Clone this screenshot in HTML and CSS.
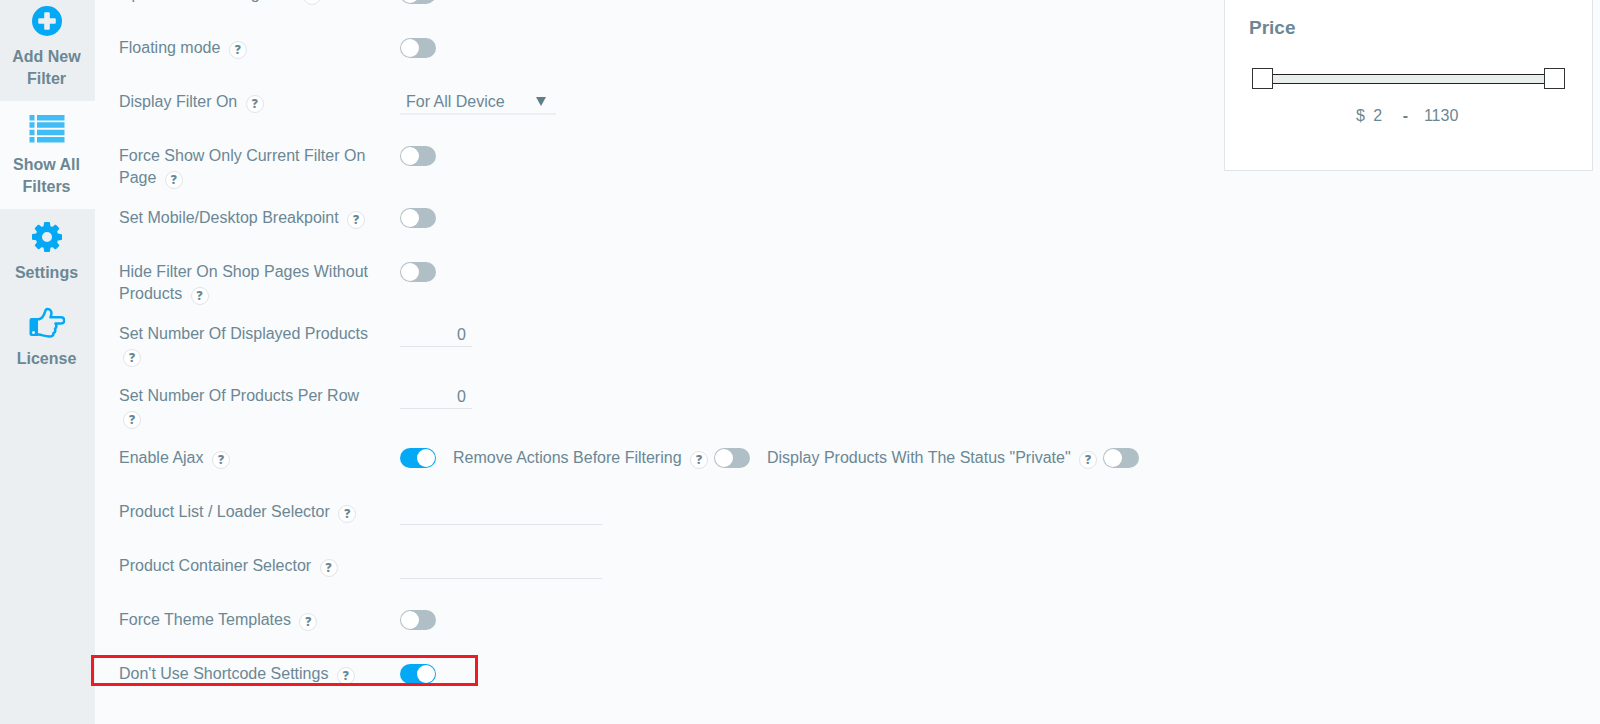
FILE: index.html
```html
<!DOCTYPE html>
<html lang="en">
<head>
<meta charset="utf-8">
<title>Filter settings</title>
<link rel="stylesheet" href="styles.css">
</head>
<body>
<div class="app">
  <nav class="sidebar">
    <a class="nav-item" href="#add">
      <svg class="icon" viewBox="0 0 36 32"><circle cx="18" cy="16" r="15"/><path class="cut" d="M16.200 7.200h3.600a1 1 0 0 1 1 1v5h5a1 1 0 0 1 1 1v3.600a1 1 0 0 1-1 1h-5v5a1 1 0 0 1-1 1h-3.600a1 1 0 0 1-1-1v-5h-5a1 1 0 0 1-1-1v-3.600a1 1 0 0 1 1-1h5v-5a1 1 0 0 1 1-1z"/></svg>
      <span>Add New Filter</span>
    </a>
    <a class="nav-item active" href="#all">
      <svg class="icon" viewBox="0 0 36 32"><path d="M.500 2h5v5.500h-5zM8 2h27.500v5.500H8zM.500 9.300h5v5.500h-5zM8 9.300h27.500v5.500H8zM.500 16.700h5v5.500h-5zM8 16.700h27.500v5.500H8zM.500 24h5v5.500h-5zM8 24h27.500v5.500H8z"/></svg>
      <span>Show All Filters</span>
    </a>
    <a class="nav-item" href="#settings">
      <svg class="icon" viewBox="-154 -179 1843 1638"><path d="M1024 640q0-106-75-181t-181-75-181 75-75 181 75 181 181 75 181-75 75-181zm512-109v222q0 12-8 23t-20 13l-185 28q-19 54-39 91 35 50 107 138 10 12 10 25t-9 23q-27 37-99 108t-94 71q-12 0-26-9l-138-108q-44 23-91 38-16 136-29 186-7 28-36 28h-222q-14 0-24.500-8.500t-11.500-21.500l-28-184q-49-16-90-37l-141 107q-10 9-25 9-14 0-25-11-126-114-165-168-7-10-7-23 0-12 8-23 15-21 51-66.500t54-70.500q-27-50-41-99l-183-27q-13-2-21-12.500t-8-23.500v-222q0-12 8-23t19-13l186-28q14-46 39-92-40-57-107-138-10-12-10-24 0-10 9-23 26-36 98.500-107.500t94.500-71.500q13 0 26 10l138 107q44-23 91-38 16-136 29-186 7-28 36-28h222q14 0 24.500 8.500t11.500 21.500l28 184q49 16 90 37l142-107q9-9 24-9 13 0 25 10 129 119 165 170 7 8 7 22 0 12-8 23-15 21-51 66.500t-54 70.500q26 50 41 98l183 28q13 2 21 12.500t8 23.500z"/></svg>
      <span>Settings</span>
    </a>
    <a class="nav-item" href="#license">
      <svg class="icon" viewBox="0 0 36 32"><path d="M.500 13a2 2 0 0 1 2-2H9v18H2.500a2 2 0 0 1-2-2z"/><path class="line" d="M8 12.300h2c3-1 5-4 6-7.500.5-2 1.500-3 3-2.800 3 .3 4.500 3.500 2.500 8.300H32c4.300 0 4.300 6.200 0 6.200h-5.500c1.500 2 1 4.300-.5 5.300.7 2-.2 3.700-1.500 4.200.2 2.500-1.700 3.800-4.200 3.600C16 29.300 13 28 9.500 27.500H8"/><circle class="cut" cx="4.500" cy="25.500" r="1.500"/></svg>
      <span>License</span>
    </a>
  </nav>

  <main class="settings">
    <div class="row"><div class="label"><label for="s0">Open Filter Loading Icon</label> <button class="help">?</button></div><div class="field"><input class="toggle" type="checkbox" id="s0"></div></div>
    <div class="row"><div class="label"><label for="s1">Floating mode</label> <button class="help">?</button></div><div class="field"><input class="toggle" type="checkbox" id="s1"></div></div>
    <div class="row"><div class="label"><label for="s2">Display Filter On</label> <button class="help">?</button></div><div class="field"><div class="select-box"><select class="select" id="s2"><option>For All Device</option></select><svg class="arrow" viewBox="0 0 10 9"><path d="M0 0h10L5 9z"/></svg></div></div></div>
    <div class="row"><div class="label"><label for="s3">Force Show Only Current Filter On Page</label> <button class="help">?</button></div><div class="field"><input class="toggle" type="checkbox" id="s3"></div></div>
    <div class="row"><div class="label"><label for="s4">Set Mobile/Desktop Breakpoint</label> <button class="help">?</button></div><div class="field"><input class="toggle" type="checkbox" id="s4"></div></div>
    <div class="row"><div class="label"><label for="s5">Hide Filter On Shop Pages Without Products</label> <button class="help">?</button></div><div class="field"><input class="toggle" type="checkbox" id="s5"></div></div>
    <div class="row"><div class="label"><label for="s6">Set Number Of Displayed Products</label> <button class="help">?</button></div><div class="field"><input class="text number" type="text" id="s6" value="0"></div></div>
    <div class="row"><div class="label"><label for="s7">Set Number Of Products Per Row</label> <button class="help">?</button></div><div class="field"><input class="text number" type="text" id="s7" value="0"></div></div>
    <div class="row"><div class="label"><label for="s8">Enable Ajax</label> <button class="help">?</button></div><div class="field">
      <input class="toggle" type="checkbox" id="s8" checked>
      <div class="extra"><div><label for="s9">Remove Actions Before Filtering</label> <button class="help">?</button></div><input class="toggle" type="checkbox" id="s9"></div>
      <div class="extra"><div><label for="s10">Display Products With The Status "Private"</label> <button class="help">?</button></div><input class="toggle" type="checkbox" id="s10"></div>
    </div></div>
    <div class="row"><div class="label"><label for="s11">Product List / Loader Selector</label> <button class="help">?</button></div><div class="field"><input class="text" type="text" id="s11"></div></div>
    <div class="row"><div class="label"><label for="s12">Product Container Selector</label> <button class="help">?</button></div><div class="field"><input class="text" type="text" id="s12"></div></div>
    <div class="row"><div class="label"><label for="s13">Force Theme Templates</label> <button class="help">?</button></div><div class="field"><input class="toggle" type="checkbox" id="s13"></div></div>
    <div class="row marked"><div class="label"><label for="s14">Don't Use Shortcode Settings</label> <button class="help">?</button></div><div class="field"><input class="toggle" type="checkbox" id="s14" checked></div></div>
  </main>

  <aside class="preview">
    <h2 class="title">Price</h2>
    <div class="slider"><button class="handle" aria-label="Minimum price"></button><div class="track"></div><button class="handle" aria-label="Maximum price"></button></div>
    <div class="range"><span>$</span><input class="price" type="text" aria-label="From" value="2"><span class="dash">-</span><input class="price wide" type="text" aria-label="To" value="1130"></div>
  </aside>
</div>
</body>
</html>
```
FILE: styles.css
```css
*, *::before, *::after { box-sizing: border-box; }
body {
  margin: 0;
  background: #f9fbfd;
  color: #6b8794;
  font: 16px/22px "Liberation Sans", Arial, sans-serif;
}
button, input, select { font: inherit; color: inherit; margin: 0; padding: 0; border-radius: 0; }
.app { display: flex; align-items: flex-start; height: 100vh; overflow: hidden; }

.sidebar { flex: none; width: 95px; height: 100%; background: #ebeff2; }
.nav-item {
  display: flex; flex-direction: column; align-items: center; gap: 9px;
  padding: 12px 10px 11px 8px;
  color: inherit; text-decoration: none; text-align: center; font-weight: bold;
}
.nav-item:first-child { padding-top: 5px; }
.nav-item.active { background: #f9fbfd; }
.icon { width: 36px; height: 32px; fill: #03a9f4; }
.active .icon { opacity: .75; }
.icon .cut { fill: #ebeff2; }
.icon .line { fill: none; stroke: #03a9f4; stroke-width: 2.500; stroke-linejoin: round; }

.settings { flex: 1; min-width: 0; padding-left: 24px; margin-top: -17px; }
.row { position: relative; display: flex; align-items: flex-start; gap: 21px; min-height: 54px; padding-bottom: 18px; }
.label { flex: none; width: 260px; }
.help {
  width: 18px; height: 18px; margin-left: 4px;
  border: 1px solid #dfe5e8; border-radius: 50%;
  background: #fff; font: 800 12px/14px "Open Sans", sans-serif; text-align: center;
  vertical-align: -1px;
}
.field { display: flex; align-items: flex-start; gap: 17px; }
.extra { display: flex; gap: 6px; }

.toggle {
  appearance: none; flex: none; display: flex;
  width: 36px; height: 20px; margin-top: 1px; padding: 1px;
  border-radius: 10px; background: #b0bec5;
}
.toggle::before { content: ""; width: 18px; height: 18px; border-radius: 50%; background: #fff; }
.toggle:checked { justify-content: flex-end; background: #03a9f4; }

.select-box { position: relative; width: 156px; }
.select {
  appearance: none; width: 100%; height: 24px; padding: 0 6px;
  border: 0; border-bottom: 2px solid #ebeff2; background: transparent;
}
.arrow { position: absolute; right: 10px; top: 6px; width: 10px; height: 9px; fill: #5f7d8b; pointer-events: none; }
.text {
  width: 202px; height: 24px; border: 0; border-bottom: 1px solid #dfe5e8;
  background: transparent;
}
.number { width: 72px; padding-right: 6px; text-align: right; }

.marked::after {
  content: ""; position: absolute; left: -28px; top: -8px; width: 387px; height: 31px;
  border: 3px solid #ed1c24; pointer-events: none;
}

.preview {
  flex: none; width: 369px; margin-right: 7px; padding: 16px 24px 43px;
  background: #fff; border: 1px solid #dfe5e8; border-top: 0;
}
.title { margin: 0; font-size: 19px; line-height: 24px; }
.slider { display: flex; align-items: center; margin: 28px 3px 0; }
.handle { width: 21px; height: 21px; border: 1px solid #333; background: #fff; }
.track { flex: 1; height: 10px; border: solid #222; border-width: 1px 0; background: #e8eeee; }
.range { display: flex; justify-content: center; margin-top: 16px; }
.price { width: 26px; border: 0; background: transparent; text-align: center; }
.price.wide { width: 40px; }
.dash { margin: 0 13px 0 12px; font-weight: bold; }
```
